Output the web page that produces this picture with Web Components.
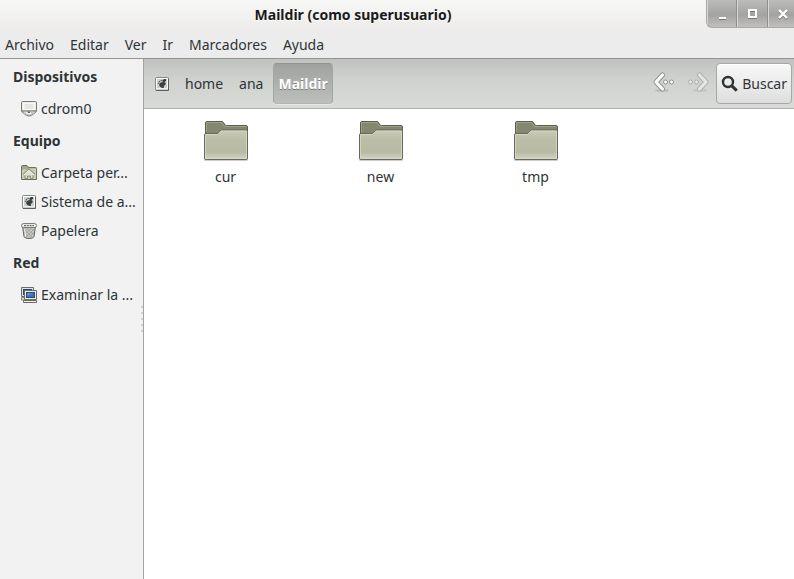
<!DOCTYPE html>
<html lang="es">
<head>
<meta charset="utf-8">
<title>Maildir (como superusuario)</title>
<style>
html, body { height: 100%; margin: 0; }
body { font: 14px/20px "Noto Sans", "Open Sans", sans-serif; color: #2e3436; }
</style>
</head>
<body>
<file-window></file-window>
<script>
const define = (name, html, setup) => {
  const template = document.createElement('template');
  template.innerHTML = html;
  customElements.define(name, class extends HTMLElement {
    constructor() {
      super();
      this.attachShadow({ mode: 'open' }).append(template.content.cloneNode(true));
    }
    connectedCallback() { if (setup) setup(this, this.shadowRoot); }
  });
};

const ICONS = {
  drive: [16, 16, `<path d="M.5 1.500q0-1 1-1h13q1 0 1 1v9l-3 2.500q-2 2-4.500 2t-4.500-2l-3-2.500z" fill="#dcdcda" stroke="#7a7d79"/>
    <path d="M1.500 1.500h13v7.500h-13z" fill="#f8f8f6"/><path d="M3.500 3h9v5h-9z" fill="#e6e6e3"/>
    <path d="M1 10h14" stroke="#5c605c"/><path d="M3.500 10.500q1 3.500 4.500 3.500t4.500-3.500z" fill="#f7f8f3" stroke="#a3a69f" stroke-width=".7"/><path d="M6 10.500h3v1.500H7z" fill="#666"/><path d="M9 11l2 1.500 1-2z" fill="#a9c39b"/>`],
  home: [16, 16, `<path d="M.5 14.500v-13q0-1 1-1h4.500l1.500 2h7q1 0 1 1v11z" fill="#a6a88e" stroke="#6d6f5a"/>
    <path d="M1.500 13.500v-8.500h5l1-1h7v9.500z" fill="#c6c8b2" stroke="#d8dac8" stroke-width=".8"/>
    <path d="M2.800 10.200L8 5.500l5.200 4.700" fill="none" stroke="#7b7e69" stroke-width="3"/>
    <path d="M4 9.500v4h2.500v-2.500h3v2.500H12v-4L8 6z" fill="#dfe1d0" stroke="#7b7e69" stroke-width=".8"/>
    <path d="M2.800 10.200L8 5.500l5.200 4.700" fill="none" stroke="#f6f6ee" stroke-width="1.500"/>`],
  disk: [14, 14, `<rect x=".5" y=".5" width="13" height="13" rx="1" fill="#cfd0ce" stroke="#868885"/>
    <path d="M1.500 12V1.500h11V12" fill="none" stroke="#fff"/><path d="M1.500 11.500h11" stroke="#eee"/><path d="M1 13.500h12.500v-12" fill="none" stroke="#5c605c"/>
    <ellipse cx="9.300" cy="3.500" rx="2" ry="1.200" transform="rotate(-20 9.300 3.500)" fill="#2e3436"/><path d="M6.700 3.200l-1.100.6M4.900 4.200l-.9.800M3.700 5.700l-.4 1" stroke="#4b5153" stroke-width="1.300"/>
    <path d="M10 5.200Q7 4.500 5 6 3.300 7.500 4.600 9.300 6.300 11.500 8.500 10.900q1.200-1 .2-1.900L7.700 8.400q1.600.7 2.600-.5.900-1.900-.3-2.700z" fill="#3b4142"/>`],
  trash: [16, 16, `<path d="M1.500 3l1.500 10.500q.4 2 5 2t5-2L14.500 3z" fill="#c8cac7" stroke="#60635f"/>
    <path d="M3 6l8 8M2.800 9l4.500 5M6 5.500l6.500 6M10 5.500l3 3M13 6l-8 8M13 9l-4.500 5M10 5.500l-6.500 6M6 5.500l-3 3" stroke="#83868280" stroke-width="1"/>
    <path d="M3.500 6l1 7" stroke="#f3f3f2"/>
    <rect x=".6" y=".6" width="14.800" height="4" rx="1.800" fill="#f2f2f0" stroke="#70736f"/><path d="M3 2.600h10" stroke="#656963" stroke-width="1.300" stroke-dasharray="2 .8"/>`],
  network: [16, 16, `<path d="M.5.500h12v9H.5z" fill="#e2e2d8" stroke="#6b6d66"/><path d="M2 2h9v6H2z" fill="#204a87"/>
    <path d="M.5 10.500h4v2.500h-4z" fill="#e2e2d8" stroke="#6b6d66" stroke-width=".8"/>
    <path d="M3.500 3.500h12v9h-12z" fill="#eeeee6" stroke="#6b6d66"/><path d="M5 5h9v6H5z" fill="#204a87"/><path d="M6 6h7v4H6z" fill="#3d70b2"/><path d="M6 6h6l-4 2.500H6z" fill="#5e8bc6"/>
    <path d="M2.500 13.500h13v2h-13z" fill="#eeeee6" stroke="#6b6d66"/>`],
  back: [24, 24, `<ellipse cx="10" cy="21.500" rx="7" ry="1.500" fill="#777" opacity=".3"/>
    <path d="M10.500 6L4 13l6.500 7" fill="none" stroke="#8f918d" stroke-width="5" stroke-linecap="round" stroke-linejoin="round"/><path d="M10.500 6L4 13l6.500 7" fill="none" stroke="#fafafa" stroke-width="3.200" stroke-linecap="round" stroke-linejoin="round"/>
    <circle cx="13.500" cy="13" r="2" fill="#fafafa" stroke="#8f918d"/><circle cx="19.500" cy="13" r="2" fill="#fafafa" stroke="#8f918d"/>`],
  folder: [46, 42, `<defs><linearGradient id="f" x2="0" y2="1"><stop stop-color="#c9cbb8"/><stop offset=".3" stop-color="#bcbea8"/><stop offset=".75" stop-color="#b8baa3"/><stop offset="1" stop-color="#d4d6c7"/></linearGradient></defs>
    <rect x="1" y="38" width="44" height="3" rx="1.500" fill="#000" opacity=".2"/>
    <path d="M2.500 36V3q0-1.500 1.500-1.500h15q1 0 1.500 1l1.500 2.500q.5.500 1.500.500H43q1.500 0 1.500 1.500V36z" fill="#85876f" stroke="#5b5d4b"/>
    <path d="M3.500 12V2.500h15l3 4h22" fill="none" stroke="#a0a28c"/>
    <path d="M1.500 38V15q0-1.500 1.500-1.500h11q1 0 1.500-.6l2-2.300q.5-.6 1.500-.6h24q1.500 0 1.500 1.500V38q0 1.500-1.500 1.500H3q-1.500 0-1.500-1.500z" fill="url(#f)" stroke="#68695a"/>
    <path d="M2.500 38.500v-24h12l3.500-3.500h25.500v27.500z" fill="none" stroke="#dcddd0" stroke-opacity=".7"/>`],
  search: [18, 18, `<circle cx="7" cy="7" r="5" fill="none" stroke="#2e3436" stroke-width="2.400"/><path d="M10.800 10.800l5 4.800" stroke="#2e3436" stroke-width="3"/>`],
  minimize: [12, 12, `<path d="M2 11h7" stroke="#777" stroke-width="2"/><path d="M2 10h7" stroke="#fff" stroke-width="2"/>`],
  maximize: [12, 12, `<rect x="2" y="3" width="7" height="7" fill="none" stroke="#777" stroke-width="2"/><rect x="2" y="2" width="7" height="7" fill="none" stroke="#fff" stroke-width="2"/>`],
  close: [12, 12, `<path d="M2 3l8 8M10 3l-8 8" stroke="#777" stroke-width="2.400"/><path d="M2 2l8 8M10 2l-8 8" stroke="#fff" stroke-width="2.400"/>`]
};
ICONS.forward = [24, 24, `<g transform="matrix(-1 0 0 1 24 0)" opacity=".5">${ICONS.back[2]}</g>`];

define('ui-icon', `<style>:host{display:inline-flex;flex:none}svg{display:block}</style>`, (el, root) => {
  const [w, h, body] = ICONS[el.getAttribute('name')];
  root.innerHTML += `<svg width="${w}" height="${h}" viewBox="0 0 ${w} ${h}" aria-hidden="true">${body}</svg>`;
});

define('title-bar', `<style>
  :host{display:grid;grid-template-columns:1fr 88px;height:30px;background:linear-gradient(#f7f7f6,#edecea)}
  h1{margin:0;font-size:14px;line-height:30px;text-align:center;color:#1a1a1a;text-shadow:0 1px #fff}
  .controls{display:grid;grid-template-columns:30px 31px 1fr;height:28px;box-sizing:border-box;border:solid #a9a9a8;border-width:0 0 1px 1px;border-bottom-left-radius:6px;overflow:hidden;background:linear-gradient(#bcbcbb,#a3a3a2 55%,#c0bfbd)}
  button{border:0;border-left:1px solid #d8d8d7;padding:0;background:none;display:grid;place-items:center}
  button:last-child{padding-left:2px}
  button+button{box-shadow:-1px 0 #8f8f8e}
  </style><h1><slot></slot></h1>
  <div class="controls"><button aria-label="Minimizar"><ui-icon name="minimize"></ui-icon></button><button aria-label="Maximizar"><ui-icon name="maximize"></ui-icon></button><button aria-label="Cerrar"><ui-icon name="close"></ui-icon></button></div>`);

define('menu-bar', `<style>
  :host{display:block;background:#ececec;border-bottom:1px solid #949493}
  nav{display:flex;gap:16px;padding:5px 5px 3px}
  </style><nav aria-label="Menú"><slot></slot></nav>`);

define('menu-entry', `<style>
  :host{display:block}button{display:block;font:inherit;color:inherit;border:0;padding:0;background:none}
  </style><button><slot></slot></button>`);

define('side-section', `<style>
  :host{display:block}
  h2{margin:0;padding:0 13px;font-size:14px;line-height:35px}
  </style><section><h2><slot name="title"></slot></h2><slot></slot></section>`);

define('side-place', `<style>
  :host{display:block}
  a{display:flex;align-items:center;gap:4px;height:29px;padding-left:21px;color:inherit;text-decoration:none;white-space:nowrap}
  ::slotted(ui-icon){width:16px;justify-content:center}
  </style><a href="#"><slot name="icon"></slot><span><slot></slot></span></a>`);

define('side-bar', `<style>
  :host{display:block;position:relative;background:#f2f2f2;border-right:1px solid #a3a3a2}
  .grip{position:absolute;right:0;top:0;bottom:0;display:flex;flex-direction:column;justify-content:center;gap:4px}
  i{width:2px;height:2px;background:#d2d2d2}
  </style><slot></slot><div class="grip"><i></i><i></i><i></i><i></i><i></i></div>`);

define('path-button', `<style>
  :host{display:block}
  button{font:inherit;color:inherit;height:100%;box-sizing:border-box;padding:0 5px;border:1px solid transparent;border-radius:4px;background:none;display:flex;align-items:center}
  :host([current]) button{font-weight:bold;color:#fff;padding:0 4px;text-shadow:0 1px #777;background:linear-gradient(#9fa29f,#bdbfbd);border-color:#8f9490 #a2a6a2 #b4b7b4;box-shadow:0 1px #e6e7e6}
  </style><button><slot></slot></button>`);

define('tool-bar', `<style>
  :host{display:flex;align-items:stretch;box-sizing:border-box;height:50px;padding:4px 2px 4px 5px;border-bottom:1px solid #b0b2b0;background:linear-gradient(#bfc2bf,#cfd1cf 40%,#d8dbd8)}
  nav{display:flex;gap:4px;flex:1}
  .history{display:flex;align-items:center;gap:10px;padding-right:6px}
  button{font:inherit;color:inherit;border:0;padding:0;background:none}
  .search{display:flex;align-items:center;gap:3px;padding:0 4px;border:1px solid #a6a8a6;border-radius:4px;background:linear-gradient(#f8f8f8,#dedede);box-shadow:inset 0 1px #fff}
  </style><nav aria-label="Ruta"><slot></slot></nav>
  <div class="history"><button aria-label="Atrás"><ui-icon name="back"></ui-icon></button><button aria-label="Adelante" disabled><ui-icon name="forward"></ui-icon></button></div>
  <button class="search"><ui-icon name="search"></ui-icon><span>Buscar</span></button>`);

define('folder-item', `<style>
  :host{display:block}
  a{display:flex;flex-direction:column;align-items:center;gap:5px;color:inherit;text-decoration:none}
  </style><a href="#"><ui-icon name="folder"></ui-icon><span><slot></slot></span></a>`);

define('folder-grid', `<style>
  :host{display:grid;grid-template-columns:repeat(auto-fill,155px);align-content:start;gap:24px 0;padding:11px 4px;background:#fff;flex:1}
  </style><slot></slot>`);

define('file-window', `<style>
  :host{display:flex;flex-direction:column;min-height:100%}
  .body{display:grid;grid-template-columns:144px 1fr;flex:1}
  main{display:flex;flex-direction:column;min-width:0}
  </style>
  <title-bar>Maildir (como superusuario)</title-bar>
  <menu-bar><menu-entry>Archivo</menu-entry><menu-entry>Editar</menu-entry><menu-entry>Ver</menu-entry><menu-entry>Ir</menu-entry><menu-entry>Marcadores</menu-entry><menu-entry>Ayuda</menu-entry></menu-bar>
  <div class="body">
    <side-bar>
      <side-section><span slot="title">Dispositivos</span><side-place><ui-icon slot="icon" name="drive"></ui-icon>cdrom0</side-place></side-section>
      <side-section><span slot="title">Equipo</span><side-place><ui-icon slot="icon" name="home"></ui-icon>Carpeta per...</side-place><side-place><ui-icon slot="icon" name="disk"></ui-icon>Sistema de a...</side-place><side-place><ui-icon slot="icon" name="trash"></ui-icon>Papelera</side-place></side-section>
      <side-section><span slot="title">Red</span><side-place><ui-icon slot="icon" name="network"></ui-icon>Examinar la ...</side-place></side-section>
    </side-bar>
    <main>
      <tool-bar><path-button><ui-icon name="disk"></ui-icon></path-button><path-button>home</path-button><path-button>ana</path-button><path-button current>Maildir</path-button></tool-bar>
      <folder-grid><folder-item>cur</folder-item><folder-item>new</folder-item><folder-item>tmp</folder-item></folder-grid>
    </main>
  </div>`);
</script>
</body>
</html>
